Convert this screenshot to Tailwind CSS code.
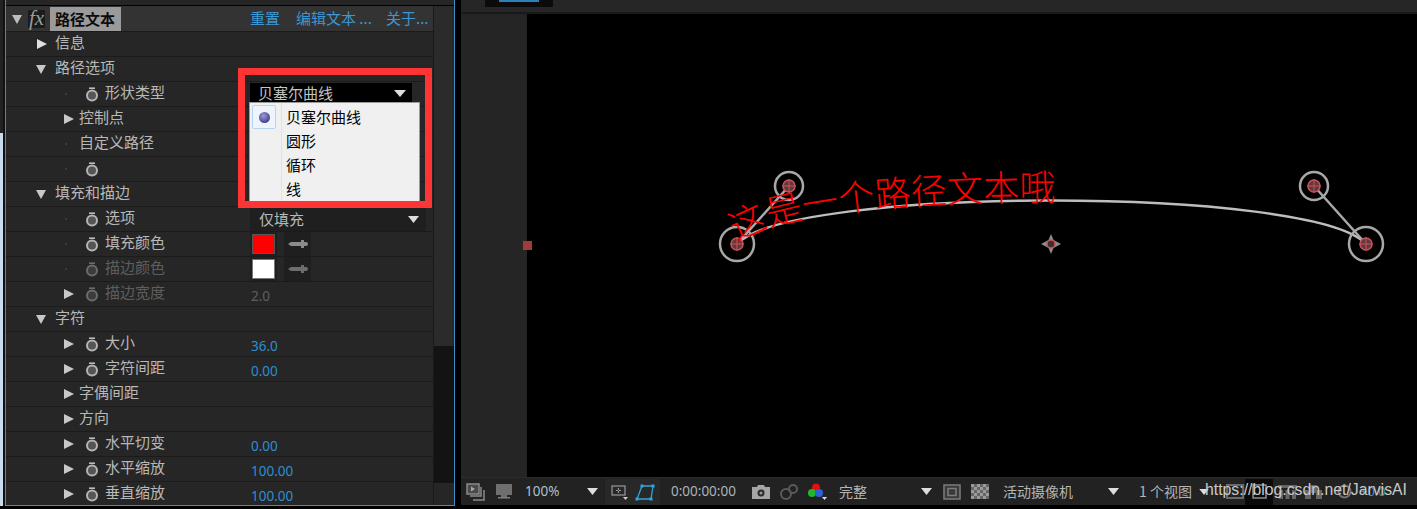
<!DOCTYPE html>
<html lang="zh"><head><meta charset="utf-8"><script src="https://cdn.jsdelivr.net/npm/@tailwindcss/browser@4"></script></head>
<body class="bg-black overflow-hidden">
<div class="relative flex w-[1417px] h-[509px] overflow-hidden bg-black font-['Noto_Sans_CJK_SC',sans-serif] text-[15px] leading-[20px] text-[#b8b8b8]">

<!-- effect controls panel -->
<div class="w-[461px] h-[509px] shrink-0 pr-[6px] bg-black">
 <div class="relative w-[455px] h-[506px] flex">
  <div class="w-[3px] h-full flex flex-col"><div class="h-[133px] bg-[#222]"></div><div class="flex-1 bg-[#c9dbee]"></div></div>
  <div class="w-[2px] h-full bg-[#111]"></div>
  <div class="flex-1 h-[506px] border-x border-b border-[#3b90cb] bg-[#262626] flex flex-col overflow-hidden">
   <div class="h-[6px] shrink-0 bg-[#262626] border-b border-black"></div>
   <div class="flex flex-1 min-h-0">
    <div class="w-[427px] shrink-0 flex flex-col">
     <!-- header -->
     <div class="h-[25px] shrink-0 flex items-center bg-[#333] text-[#3c97d3]">
      <div class="w-[22px] pl-[6px] flex"><svg width="10" height="10" viewBox="0 0 10 10"><path d="M0 1h10L5 10z" fill="#bdbdbd"/></svg></div>
      <div class="w-[17px] h-[18px] bg-[#1b1b1b] text-[#9a9a9a] font-['Liberation_Serif'] italic text-[21px] leading-[17px] text-center">fx</div>
      <div class="ml-[5px] w-[71px] h-[24px] bg-[#9a9a9a] text-[#0c0c0c] font-bold leading-[24px] pl-[5px] mr-[129px]">路径文本</div>
      <span class="w-[46px] pb-[2px]">重置</span><span class="w-[90px] pb-[2px]">编辑文本 ...</span><span class="pb-[2px]">关于...</span>
     </div>
     <!-- rows -->
     <div class="h-[25px] shrink-0 flex items-center border-t border-[#1b1b1b] pl-[30px]"><span class="w-[19px] flex"><svg width="11" height="10" viewBox="0 0 11 10"><path d="M1 0l10 5-10 5z" fill="#e0e0e0"/></svg></span><span class="pb-1">信息</span></div>
     <div class="h-[25px] shrink-0 flex items-center border-t border-[#1b1b1b] pl-[30px]"><span class="w-[19px] flex"><svg width="10" height="10" viewBox="0 0 10 10"><path d="M0 1h10L5 10z" fill="#c8c8c8"/></svg></span><span class="pb-1">路径选项</span></div>
     <div class="h-[25px] shrink-0 flex items-center border-t border-[#1b1b1b] pl-[59px]"><span class="w-[15px] flex"><span class="w-[2px] h-[2px] bg-[#3c3c3c]"></span></span><span class="w-[25px] flex pl-[5px]"><svg width="14" height="15" viewBox="0 0 14 15"><path d="M4 1.2h6" stroke="#bbb" stroke-width="1.6"/><circle cx="7" cy="8.5" r="5" fill="#555" stroke="#b5b5b5" stroke-width="2"/></svg></span><span class="pb-1">形状类型</span></div>
     <div class="h-[25px] shrink-0 flex items-center border-t border-[#1b1b1b] pl-[57px]"><span class="w-[16px] flex"><svg width="11" height="10" viewBox="0 0 11 10"><path d="M1 0l10 5-10 5z" fill="#c8c8c8"/></svg></span><span class="pb-1">控制点</span></div>
     <div class="h-[25px] shrink-0 flex items-center border-t border-[#1b1b1b] pl-[59px]"><span class="w-[14px] flex"><span class="w-[2px] h-[2px] bg-[#3c3c3c]"></span></span><span class="pb-1">自定义路径</span></div>
     <div class="h-[25px] shrink-0 flex items-center border-t border-[#1b1b1b] pl-[59px]"><span class="w-[15px] flex"><span class="w-[2px] h-[2px] bg-[#3c3c3c]"></span></span><span class="w-[25px] flex pl-[5px]"><svg width="14" height="15" viewBox="0 0 14 15"><path d="M4 1.2h6" stroke="#bbb" stroke-width="1.6"/><circle cx="7" cy="8.5" r="5" fill="#555" stroke="#b5b5b5" stroke-width="2"/></svg></span></div>
     <div class="h-[25px] shrink-0 flex items-center border-t border-[#1b1b1b] pl-[30px]"><span class="w-[19px] flex"><svg width="10" height="10" viewBox="0 0 10 10"><path d="M0 1h10L5 10z" fill="#c8c8c8"/></svg></span><span class="pb-1">填充和描边</span></div>
     <div class="h-[25px] shrink-0 flex items-center border-t border-[#1b1b1b] pl-[59px]"><span class="w-[15px] flex"><span class="w-[2px] h-[2px] bg-[#3c3c3c]"></span></span><span class="w-[25px] flex pl-[5px]"><svg width="14" height="15" viewBox="0 0 14 15"><path d="M4 1.2h6" stroke="#bbb" stroke-width="1.6"/><circle cx="7" cy="8.5" r="5" fill="#555" stroke="#b5b5b5" stroke-width="2"/></svg></span><span class="w-[145px] pb-1">选项</span><div class="w-[176px] h-[24px] bg-[#1f1f1f] flex items-center justify-between pl-[9px] pr-[7px]"><span>仅填充</span><svg width="11" height="7" viewBox="0 0 11 7"><path d="M0 0h11L5.5 7z" fill="#ddd"/></svg></div></div>
     <div class="h-[25px] shrink-0 flex items-center border-t border-[#1b1b1b] pl-[59px]"><span class="w-[15px] flex"><span class="w-[2px] h-[2px] bg-[#3c3c3c]"></span></span><span class="w-[25px] flex pl-[5px]"><svg width="14" height="15" viewBox="0 0 14 15"><path d="M4 1.2h6" stroke="#bbb" stroke-width="1.6"/><circle cx="7" cy="8.5" r="5" fill="#555" stroke="#b5b5b5" stroke-width="2"/></svg></span><span class="w-[145px] pb-1">填充颜色</span><span class="w-[27px] h-[24px] bg-[#1f1f1f] p-[2px] flex items-center"><span class="block w-[23px] h-[20px] bg-[#ff0000] border border-[#555]"></span></span><span class="ml-[7px] w-[27px] h-[24px] bg-[#1f1f1f] flex items-center justify-center"><svg width="22" height="10" viewBox="0 0 22 10"><path d="M1 5l3-2h10V1h3v2h2a2 2 0 0 1 0 4h-2v2h-3V7H4z" fill="#8b8b8b"/></svg></span></div>
     <div class="h-[25px] shrink-0 flex items-center border-t border-[#1b1b1b] pl-[59px] text-[#5e5e5e]"><span class="w-[15px] flex"><span class="w-[2px] h-[2px] bg-[#3c3c3c]"></span></span><span class="w-[25px] flex pl-[5px]"><svg width="14" height="15" viewBox="0 0 14 15"><path d="M4 1.2h6" stroke="#6c6c6c" stroke-width="1.6"/><circle cx="7" cy="8.5" r="5" fill="#3c3c3c" stroke="#6c6c6c" stroke-width="2"/></svg></span><span class="w-[145px] pb-1">描边颜色</span><span class="w-[27px] h-[24px] bg-[#1f1f1f] p-[2px] flex items-center"><span class="block w-[23px] h-[20px] bg-white border border-[#777]"></span></span><span class="ml-[7px] w-[27px] h-[24px] bg-[#1f1f1f] flex items-center justify-center"><svg width="22" height="10" viewBox="0 0 22 10"><path d="M1 5l3-2h10V1h3v2h2a2 2 0 0 1 0 4h-2v2h-3V7H4z" fill="#6d6d6d"/></svg></span></div>
     <div class="h-[25px] shrink-0 flex items-center border-t border-[#1b1b1b] pl-[57px] text-[#5e5e5e]"><span class="w-[17px] flex"><svg width="11" height="10" viewBox="0 0 11 10"><path d="M1 0l10 5-10 5z" fill="#c8c8c8"/></svg></span><span class="w-[25px] flex pl-[5px]"><svg width="14" height="15" viewBox="0 0 14 15"><path d="M4 1.2h6" stroke="#6c6c6c" stroke-width="1.6"/><circle cx="7" cy="8.5" r="5" fill="#3c3c3c" stroke="#6c6c6c" stroke-width="2"/></svg></span><span class="w-[146px] pb-1">描边宽度</span><span class="font-['Noto_Sans'] text-[13.5px] pt-[3px]">2.0</span></div>
     <div class="h-[25px] shrink-0 flex items-center border-t border-[#1b1b1b] pl-[30px]"><span class="w-[19px] flex"><svg width="10" height="10" viewBox="0 0 10 10"><path d="M0 1h10L5 10z" fill="#c8c8c8"/></svg></span><span class="pb-1">字符</span></div>
     <div class="h-[25px] shrink-0 flex items-center border-t border-[#1b1b1b] pl-[57px]"><span class="w-[17px] flex"><svg width="11" height="10" viewBox="0 0 11 10"><path d="M1 0l10 5-10 5z" fill="#c8c8c8"/></svg></span><span class="w-[25px] flex pl-[5px]"><svg width="14" height="15" viewBox="0 0 14 15"><path d="M4 1.2h6" stroke="#bbb" stroke-width="1.6"/><circle cx="7" cy="8.5" r="5" fill="#555" stroke="#b5b5b5" stroke-width="2"/></svg></span><span class="w-[146px] pb-1">大小</span><span class="font-['Noto_Sans'] text-[13.5px] text-[#2d8ed2] pt-[3px]">36.0</span></div>
     <div class="h-[25px] shrink-0 flex items-center border-t border-[#1b1b1b] pl-[57px]"><span class="w-[17px] flex"><svg width="11" height="10" viewBox="0 0 11 10"><path d="M1 0l10 5-10 5z" fill="#c8c8c8"/></svg></span><span class="w-[25px] flex pl-[5px]"><svg width="14" height="15" viewBox="0 0 14 15"><path d="M4 1.2h6" stroke="#bbb" stroke-width="1.6"/><circle cx="7" cy="8.5" r="5" fill="#555" stroke="#b5b5b5" stroke-width="2"/></svg></span><span class="w-[146px] pb-1">字符间距</span><span class="font-['Noto_Sans'] text-[13.5px] text-[#2d8ed2] pt-[3px]">0.00</span></div>
     <div class="h-[25px] shrink-0 flex items-center border-t border-[#1b1b1b] pl-[57px]"><span class="w-[16px] flex"><svg width="11" height="10" viewBox="0 0 11 10"><path d="M1 0l10 5-10 5z" fill="#c8c8c8"/></svg></span><span class="pb-1">字偶间距</span></div>
     <div class="h-[25px] shrink-0 flex items-center border-t border-[#1b1b1b] pl-[57px]"><span class="w-[16px] flex"><svg width="11" height="10" viewBox="0 0 11 10"><path d="M1 0l10 5-10 5z" fill="#c8c8c8"/></svg></span><span class="pb-1">方向</span></div>
     <div class="h-[25px] shrink-0 flex items-center border-t border-[#1b1b1b] pl-[57px]"><span class="w-[17px] flex"><svg width="11" height="10" viewBox="0 0 11 10"><path d="M1 0l10 5-10 5z" fill="#c8c8c8"/></svg></span><span class="w-[25px] flex pl-[5px]"><svg width="14" height="15" viewBox="0 0 14 15"><path d="M4 1.2h6" stroke="#bbb" stroke-width="1.6"/><circle cx="7" cy="8.5" r="5" fill="#555" stroke="#b5b5b5" stroke-width="2"/></svg></span><span class="w-[146px] pb-1">水平切变</span><span class="font-['Noto_Sans'] text-[13.5px] text-[#2d8ed2] pt-[3px]">0.00</span></div>
     <div class="h-[25px] shrink-0 flex items-center border-t border-[#1b1b1b] pl-[57px]"><span class="w-[17px] flex"><svg width="11" height="10" viewBox="0 0 11 10"><path d="M1 0l10 5-10 5z" fill="#c8c8c8"/></svg></span><span class="w-[25px] flex pl-[5px]"><svg width="14" height="15" viewBox="0 0 14 15"><path d="M4 1.2h6" stroke="#bbb" stroke-width="1.6"/><circle cx="7" cy="8.5" r="5" fill="#555" stroke="#b5b5b5" stroke-width="2"/></svg></span><span class="w-[146px] pb-1">水平缩放</span><span class="font-['Noto_Sans'] text-[13.5px] text-[#2d8ed2] pt-[3px]">100.00</span></div>
     <div class="h-[25px] shrink-0 flex items-center border-t border-[#1b1b1b] pl-[57px]"><span class="w-[17px] flex"><svg width="11" height="10" viewBox="0 0 11 10"><path d="M1 0l10 5-10 5z" fill="#c8c8c8"/></svg></span><span class="w-[25px] flex pl-[5px]"><svg width="14" height="15" viewBox="0 0 14 15"><path d="M4 1.2h6" stroke="#bbb" stroke-width="1.6"/><circle cx="7" cy="8.5" r="5" fill="#555" stroke="#b5b5b5" stroke-width="2"/></svg></span><span class="w-[146px] pb-1">垂直缩放</span><span class="font-['Noto_Sans'] text-[13.5px] text-[#2d8ed2] pt-[3px]">100.00</span></div>
    </div>
    <!-- scrollbar -->
    <div class="flex-1 flex flex-col border-l border-[#1a1a1a]">
     <div class="h-[340px] bg-[#2b2b2b] mr-[2px]"></div>
     <div class="h-[137px] bg-[#131313]"></div>
     <div class="flex-1 bg-[#262626]"></div>
    </div>
   </div>
  </div>
 </div>
</div>

<!-- composition viewer -->
<div class="flex-1 h-[509px] flex flex-col">
 <div class="h-[14px] shrink-0 bg-[#262626] border-b-2 border-[#191919] pl-[24px]"><div class="w-[68px] h-[7px] bg-[#0b0b0b] flex justify-center"><span class="block w-[40px] h-[2px] bg-[#2d7fb8]"></span></div></div>
 <div class="flex-1 flex min-h-0">
  <div class="w-[66px] bg-[#252525]"></div>
  <div class="flex-1 bg-black"></div>
 </div>
 <!-- toolbar -->
 <div class="h-[28px] shrink-0 border-t border-[#2c2c2c] bg-[#222] flex items-center text-[14px] text-[#b4b4b4]">
  <svg class="ml-[5px]" width="19" height="18" viewBox="0 0 19 18" fill="none" stroke="#8a8a8a" stroke-width="1.5"><rect x="1" y="1" width="12" height="10" fill="#4a4a4a"/><path d="M15 4v9H4M18 7v10H7"/><path d="M5 3.5l4 2.5-4 2.5z" fill="#aaa" stroke="none"/></svg>
  <svg class="ml-[10px]" width="18" height="17" viewBox="0 0 18 17"><rect x="1" y="1" width="16" height="11" fill="#6f6f6f"/><rect x="6" y="12" width="6" height="2" fill="#6f6f6f"/><rect x="3" y="14" width="12" height="1.5" fill="#808080"/></svg>
  <span class="ml-[12px] w-[62px] pb-[2px] font-['Noto_Sans'] text-[13.5px] text-[#a9c0d0]">100%</span>
  <svg width="11" height="7" viewBox="0 0 11 7"><path d="M0 0h11L5.5 7z" fill="#ddd"/></svg>
  <div class="ml-[7px] w-[55px] h-[26px] bg-[#282828] flex items-center">
   <svg class="ml-[5px]" width="18" height="16" viewBox="0 0 18 16" fill="none" stroke="#999" stroke-width="1.2"><rect x="2" y="2" width="13" height="9"/><path d="M8.5 4v5M6 6.5h5" stroke-dasharray="2 1"/><path d="M13 13h5l-2.500 3z" fill="#ccc" stroke="none"/></svg>
   <svg class="ml-[7px]" width="20" height="18" viewBox="0 0 20 18" fill="none" stroke="#2ea5dc" stroke-width="1.3"><path d="M7 3h11l-2 13H2z"/><g fill="#2ea5dc" stroke="none"><rect x="5.5" y="1.5" width="3" height="3"/><rect x="16.5" y="1.5" width="3" height="3"/><rect x="14.5" y="14.5" width="3" height="3"/><rect x=".5" y="14.5" width="3" height="3"/></g></svg>
  </div>
  <span class="ml-[11px] w-[81px] pb-[2px] font-['Noto_Sans'] text-[13.5px] text-[#a9b4bc]">0:00:00:00</span>
  <svg width="18" height="14" viewBox="0 0 18 14"><path d="M0 2h5l1-2h6l1 2h5v12H0z" fill="#a5a5a5"/><circle cx="9" cy="8" r="3.5" fill="#2a2a2a"/><circle cx="9" cy="8" r="1.5" fill="#999"/></svg>
  <svg class="ml-[10px]" width="18" height="16" viewBox="0 0 18 16" fill="none" stroke="#5a5a5a" stroke-width="2"><circle cx="6" cy="10" r="5"/><circle cx="13" cy="5" r="4"/></svg>
  <svg class="ml-[9px]" width="20" height="17" viewBox="0 0 20 17"><circle cx="9" cy="4.5" r="4" fill="#e01010"/><circle cx="5" cy="10" r="4" fill="#1fb82a"/><circle cx="12" cy="10" r="4" fill="#2a62d8"/><path d="M15 14h5l-2.500 3z" fill="#ddd"/></svg>
  <span class="ml-[12px] w-[82px] pb-[2px]">完整</span>
  <svg width="11" height="7" viewBox="0 0 11 7"><path d="M0 0h11L5.5 7z" fill="#ddd"/></svg>
  <svg class="ml-[11px]" width="18" height="16" viewBox="0 0 18 16" fill="none" stroke="#7c7c7c" stroke-width="1.500"><rect x="1" y="1" width="16" height="14" fill="#3a3a3a"/><rect x="5" y="4.500" width="8" height="7"/></svg>
  <svg class="ml-[10px]" width="18" height="15" viewBox="0 0 18 15"><rect width="18" height="15" fill="#9a9a9a"/><path d="M3 0h3v3H3zM9 0h3v3H9zM15 0h3v3h-3zM0 3h3v3H0zM6 3h3v3H6zM12 3h3v3h-3zM3 6h3v3H3zM9 6h3v3H9zM15 6h3v3h-3zM0 9h3v3H0zM6 9h3v3H6zM12 9h3v3h-3zM3 12h3v3H3zM9 12h3v3H9zM15 12h3v3h-3z" fill="#666"/></svg>
  <span class="ml-[14px] w-[105px] pb-[2px]">活动摄像机</span>
  <svg width="11" height="7" viewBox="0 0 11 7"><path d="M0 0h11L5.5 7z" fill="#ddd"/></svg>
  <span class="ml-[20px] w-[60px] pb-[2px]">1 个视图</span>
  <svg width="10" height="6" viewBox="0 0 11 7"><path d="M0 0h11L5.5 7z" fill="#ddd"/></svg>
  <svg class="ml-[17px]" width="18" height="15" viewBox="0 0 18 15" fill="none" stroke="#6a6a6a" stroke-width="2"><rect x="1" y="1" width="16" height="13"/></svg>
  <div class="w-[28px] h-[26px] ml-[1px] bg-[#0a0a0a] flex items-center justify-center"><svg width="15" height="15" viewBox="0 0 15 15" fill="none" stroke="#8d8d8d" stroke-width="1.500"><rect x="1" y="1" width="13" height="13"/></svg></div>
  <svg class="ml-[5px]" width="19" height="14" viewBox="0 0 19 14" fill="#666"><path d="M0 0h19v3H0zM1 5h4v9H1zM7.500 5h4v9h-4zM14 5h4v9h-4z"/></svg>
  <svg class="ml-[8px]" width="17" height="14" viewBox="0 0 17 14" fill="#666"><path d="M5 0h7v5h5v9h-6V8H6v6H0V5h5z"/></svg>
  <svg class="ml-[15px]" width="15" height="15" viewBox="0 0 15 15" fill="none" stroke="#707070" stroke-width="2"><circle cx="7.500" cy="7.500" r="6"/></svg>
 </div>
 <div class="h-[4px] shrink-0 bg-black"></div>
</div>

<!-- free canvas: path and handles -->
<svg class="absolute left-0 top-0 pointer-events-none" width="1417" height="509" viewBox="0 0 1417 509" fill="none">
 <rect x="523" y="241" width="9" height="9" fill="#a33a3a"/>
 <path id="pathText" d="M737 244C789 186 1314 186 1366 244" stroke="#bdbdbd" stroke-width="2.500"/>
 <path d="M737 244L789 186M1366 244L1314 186" stroke="#a8a8a8" stroke-width="2.500"/>
 <circle cx="737" cy="244" r="17" stroke="#a8a8a8" stroke-width="2.500"/>
 <circle cx="789" cy="186" r="14" stroke="#a8a8a8" stroke-width="2.500"/>
 <circle cx="1314" cy="186" r="14" stroke="#a8a8a8" stroke-width="2.500"/>
 <circle cx="1366" cy="244" r="17" stroke="#a8a8a8" stroke-width="2.500"/>
 <circle cx="737" cy="244" r="6" fill="#5e3a3e" stroke="#c9525a" stroke-width="1.500"/><path d="M737 237v14M730 244h14" stroke="#d05058"/>
 <circle cx="789" cy="186" r="6" fill="#5e3a3e" stroke="#c9525a" stroke-width="1.500"/><path d="M789 179v14M782 186h14" stroke="#d05058"/>
 <circle cx="1314" cy="186" r="6" fill="#5e3a3e" stroke="#c9525a" stroke-width="1.500"/><path d="M1314 179v14M1307 186h14" stroke="#d05058"/>
 <circle cx="1366" cy="244" r="6" fill="#5e3a3e" stroke="#c9525a" stroke-width="1.500"/><path d="M1366 237v14M1359 244h14" stroke="#d05058"/>
 <path d="M1051 234l2.500 6 7.500 4-7.500 4-2.500 6-2.500-6-7.500-4 7.500-4z" fill="#8c8c8c"/><circle cx="1051" cy="244" r="4" fill="#333" stroke="#c9525a" stroke-width="1.500"/>
 <text fill="#ff0000" font-size="36" font-family="'Noto Sans CJK SC',sans-serif" font-weight="300"><textPath href="#pathText" startOffset="1">这是一个路径文本哦</textPath></text>
</svg>

<!-- dropdown overlay -->
<div class="absolute left-[250px] top-[83px] w-[162px] h-[20px] bg-black text-[#c4c4c4] flex items-center justify-between pl-[8px] pr-[6px]"><span class="pb-[1px]">贝塞尔曲线</span><svg width="12" height="7" viewBox="0 0 12 7"><path d="M0 0h12L6 7z" fill="#ddd"/></svg></div>
<div class="absolute left-[249px] top-[102px] w-[171px] h-[100px] bg-[#f0f0f0] border border-[#9a9a9a] text-black leading-[24px]">
 <div class="absolute left-[31px] top-0 bottom-0 w-[1px] bg-[#e2e2e2]"></div>
 <div class="absolute left-[2px] top-[2px] w-[24px] h-[24px] rounded-[2px] bg-[#eef4fc] border border-[#b4d4f6] flex items-center justify-center"><span class="block w-[11px] h-[11px] rounded-full bg-[radial-gradient(circle_at_40%_35%,#9a9ad8,#24246e)]"></span></div>
 <div class="pl-[36px] pt-[2px]">
  <div class="h-[24px]">贝塞尔曲线</div>
  <div class="h-[24px]">圆形</div>
  <div class="h-[24px]">循环</div>
  <div class="h-[24px]">线</div>
 </div>
</div>
<div class="absolute left-[238px] top-[68px] w-[194px] h-[140px] border-[7px] border-[#ff3535]"></div>

<!-- watermark over the toolbar, with the blue value it partly hides -->
<div class="absolute left-[1360px] top-[482px] font-['Noto_Sans'] text-[13px] leading-[18px] text-[#2d8ed2]">+0.0</div>
<div class="absolute left-[1205px] top-[479px] font-['Liberation_Sans'] text-[15.8px] leading-[22px] text-[#c9c9c9] whitespace-nowrap">https://blog.csdn.net/JarvisAI</div>
</div>
</body></html>
